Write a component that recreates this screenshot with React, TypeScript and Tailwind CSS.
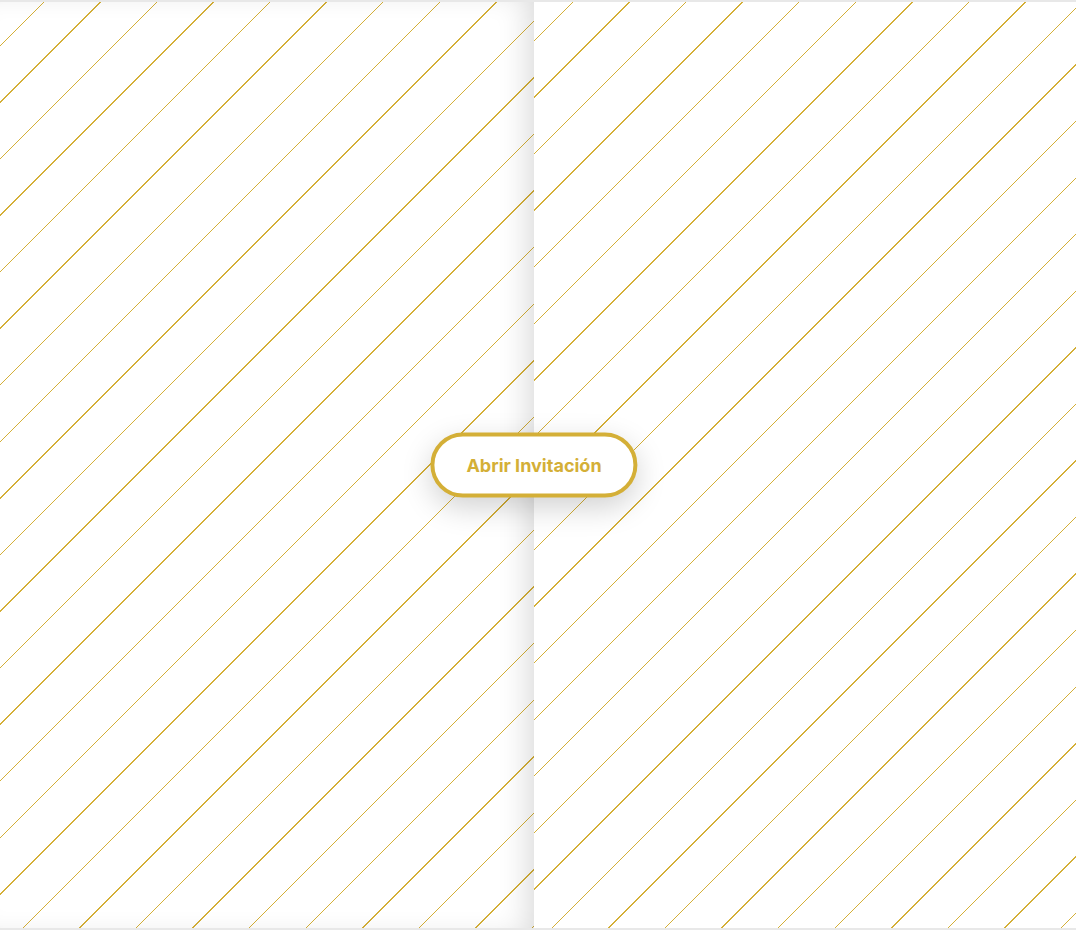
import React from "react";

const stripesLeft =
  "bg-[image:repeating-linear-gradient(135deg,transparent_0px,transparent_30.5px,#d4af37_30.5px,#d4af37_31.5px,transparent_31.5px,transparent_40px)]";
const stripesRight =
  "bg-[image:repeating-linear-gradient(135deg,transparent_0px,transparent_27px,#d4af37_27px,#d4af37_28px,transparent_28px,transparent_40px)]";

export default function App() {
  return (
    <div className="relative h-screen w-full bg-[#e8e8e8] pt-[2px] pb-[2px] font-['Inter',sans-serif]">
      <div className="flex h-full w-full">
        <div
          className={`h-full w-[534px] bg-white ${stripesLeft} shadow-[inset_-18px_0_30px_-12px_rgba(0,0,0,0.15)]`}
        />
        <div className={`h-full flex-1 bg-white ${stripesRight}`} />
      </div>
      <div className="absolute left-[534px] top-1/2 -translate-x-1/2 -translate-y-1/2">
        <button className="rounded-full border-4 border-[#d4af37] bg-white px-8 py-4 text-lg leading-[25px] font-bold text-[#d4af37] whitespace-nowrap shadow-[0_10px_30px_rgba(0,0,0,0.18)]">
          Abrir Invitación
        </button>
      </div>
    </div>
  );
}
